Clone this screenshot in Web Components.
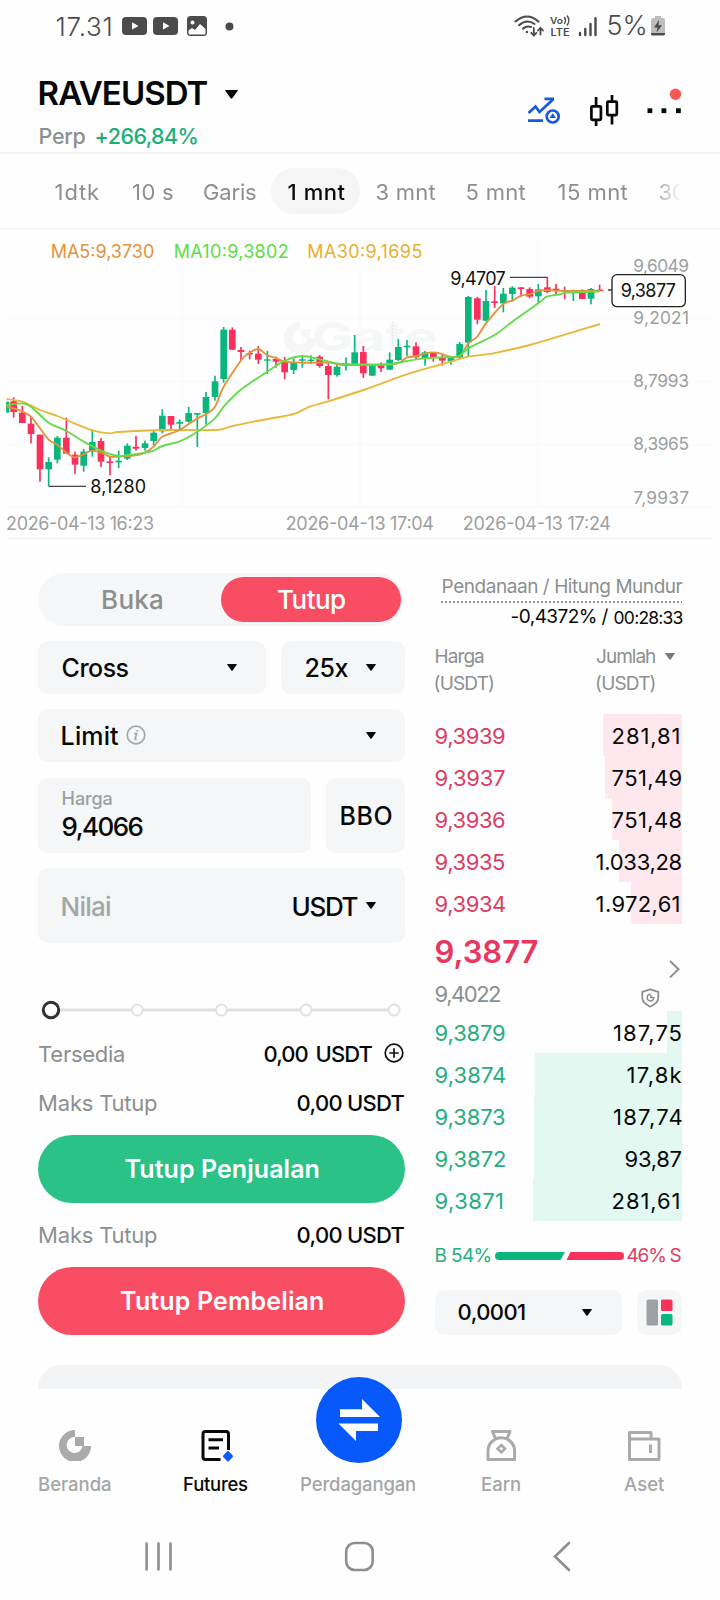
<!DOCTYPE html>
<html lang="id">
<head>
<meta charset="utf-8">
<title>RAVEUSDT Perp</title>
<style>
html,body{margin:0;padding:0;background:#fefefe}
body{width:720px;height:1600px;overflow:hidden;font-family:Inter,"Liberation Sans",sans-serif;color:#070808}
</style>
</head>
<body>
<trade-app></trade-app>
<script>
const define = (name, css, html, setup) => {
  const tpl = document.createElement('template');
  tpl.innerHTML = `<style>:host{display:block;box-sizing:border-box}*{box-sizing:border-box}svg{display:block;flex:none}${css}</style>${html}`;
  customElements.define(name, class extends HTMLElement {
    constructor() { super(); this.attachShadow({ mode: 'open' }); }
    connectedCallback() {
      if (this.shadowRoot.childNodes.length) return;
      this.shadowRoot.append(tpl.content.cloneNode(true));
      if (setup) setup(this, this.shadowRoot);
    }
  });
};

/* One line of text, tracked so its ink spans the width in "w" */
const ctx = document.createElement('canvas').getContext('2d');
define('ui-text', `:host{flex:none;white-space:nowrap;height:1.2em;line-height:1.2em}span{display:block;padding-top:1px}`, `<span><slot></slot></span>`, (el, root) => {
  const s = +el.getAttribute('s'), w = +el.getAttribute('w'), f = el.getAttribute('f') || 400;
  const txt = el.textContent;
  ctx.font = `${f} ${s}px Inter`;
  const m = ctx.measureText(txt);
  const ink = m.actualBoundingBoxRight + m.actualBoundingBoxLeft;
  el.style.cssText += `;font-size:${s}px;font-weight:${f};width:${w}px`;
  if (el.getAttribute('c')) el.style.color = el.getAttribute('c');
  const span = root.querySelector('span');
  span.style.letterSpacing = ((w - ink) / (txt.length - 1)) + 'px';
  span.style.marginLeft = (m.actualBoundingBoxLeft + .6) + 'px';
});

define('ui-caret', `:host{flex:none;width:10px;height:7px;color:#070808}svg{width:100%;height:100%}`,
  `<svg viewBox="0 0 10 7" preserveAspectRatio="none"><path d="M.6 0H9.4Q10.2.1 9.7.8L5.6 6.5Q5 7.2 4.4 6.5L.3.8Q-.2.1.6 0Z" fill="currentColor"/></svg>`);

define('status-bar', `:host{height:60px;display:flex;align-items:center;padding:0 0 9px 56px;color:#4b4b4b}.g{flex:1}`, `
<ui-text s="26" w="54" f="300">17.31</ui-text>
<svg width="86" height="22" viewBox="0 0 86 22" style="margin:1px 0 0 12px"><g fill="#4b4b4b"><rect x="0" y="2" width="25" height="18" rx="4"/><rect x="31" y="2" width="25" height="18" rx="4"/><rect x="65" y="1" width="20" height="20" rx="3.5"/></g><g fill="#fff"><path d="M10 7.2v7.4l6.5-3.7zM41 7.2v7.4l6.5-3.7z"/><circle cx="70.500" cy="7.500" r="2"/><path d="M66.500 15.500l3.500-2.500 3 2 5-6 5.500 5v4q0 1.500-1.500 1.500h-14q-1.500 0-1.500-1.500z"/></g></svg>
<svg width="9" height="9" style="margin:1px 0 0 16.500px"><circle cx="4.500" cy="4.500" r="4" fill="#4b4b4b"/></svg>
<div class="g"></div>
<svg width="86" height="24" viewBox="514 14 86 24" fill="none" stroke="#4b4b4b" stroke-width="2.100" stroke-linecap="round"><path d="M515.500 21.500Q527 11.500 538.500 21.500M519 25.200Q527 18.500 534.500 24M523 28.600Q527 25.500 531 27"/><circle cx="527" cy="32" r="1.200" fill="#4b4b4b" stroke="none"/><path d="M533.800 28v7M531.200 32.800l2.600 2.700 2.600-2.700M540.500 34.500v-6.500M538 30.500l2.500-2.700 2.500 2.700" stroke-width="1.800"/><path d="M580 35v-2M585.300 35v-6M590.500 35v-11M595.500 35V18.200" stroke-width="2.400"/><g fill="#4b4b4b" stroke="none" font-family="Inter" font-weight="600"><text x="550" y="23.900" font-size="9" textLength="13" lengthAdjust="spacingAndGlyphs">Vo</text><text x="550.500" y="36.400" font-size="10" textLength="19" lengthAdjust="spacingAndGlyphs">LTE</text></g><path d="M564.500 17.500q2 2.800 0 6M567.300 16q3 4.300 0 9" stroke-width="1.400"/></svg>
<ui-text s="27" w="37" f="300" style="margin-left:8px">5%</ui-text>
<svg width="14" height="20" viewBox="0 0 14 20" style="margin:1px 55px 0 6px"><path d="M4 0h6v2h2q2 0 2 2v13H0V4q0-2 2-2h2z" fill="#bdbdbd"/><path d="M0 17h14v1q0 1.500-1.500 1.500h-11Q0 19.500 0 18z" fill="#4b4b4b"/><path d="M8 4L3 11.500h3.500L5.500 16.500 11 9.300H7.500z" fill="#4b4b4b"/></svg>`);

define('pair-header', `:host{height:94px;border-bottom:2px solid #f5f6f6;padding-left:39px;padding-right:38px;display:flex;justify-content:space-between}
.r{display:flex;align-items:center}.a{height:66px}.b{height:20px}.i{padding-top:26px;display:flex}`, `
<div><div class="r a"><ui-text s="33" w="168" f="600">RAVEUSDT</ui-text><ui-caret style="width:13px;height:9px;margin:2px 0 0 17.500px"></ui-caret></div>
<div class="r b"><ui-text s="21.500" w="46" c="#8c8f90" f="450">Perp</ui-text><ui-text s="21.500" w="101" c="#1cae7a" f="500" style="margin-left:11px">+266,84%</ui-text></div></div>
<div class="i"><svg width="155" height="42" viewBox="527 86 155 42" fill="none"><g stroke="#1459e0" stroke-width="2.700"><path d="M528.500 113l7-6.500 4 5.500 14-13M544.500 98.900h9.500M528 120.600h15"/><circle cx="552.700" cy="116.500" r="6" stroke-width="2.700"/><path d="M552.700 113.200l3.300 4.800h-6.600z" fill="#1459e0" stroke="none"/></g><g stroke="#070808" stroke-width="2.700"><rect x="591.400" y="106.300" width="9.500" height="13.500" rx="1"/><rect x="607.300" y="101.600" width="9.500" height="13.500" rx="1"/><path d="M596.100 97v9M596.100 120v6M612 95v6.500M612 115.500v9"/></g><g fill="#070808"><rect x="647.500" y="108.300" width="4.800" height="4.800"/><rect x="661.500" y="108.300" width="4.800" height="4.800"/><rect x="676" y="108.300" width="4.800" height="4.800"/></g><circle cx="675.500" cy="94.300" r="5.700" fill="#f45b55"/></svg></div>`);

define('interval-tabs', `:host{height:76px;border-bottom:2px solid #f5f6f6;padding:0 38px 0 55px;color:#8c8f90}
.c{display:flex;align-items:center;height:74px;width:627px;overflow:hidden;-webkit-mask-image:linear-gradient(90deg,#000 596px,transparent 627px)}
.p{background:#f5f5f5;color:#070808;height:46px;border-radius:23px;width:89.500px;flex:none;display:flex;align-items:center;padding-left:17.500px;margin:0 16px 0 15px}`, `
<div class="c"><ui-text s="22" w="43.500">1dtk</ui-text><ui-text s="22" w="40" style="margin-left:34px">10 s</ui-text><ui-text s="22" w="52" style="margin-left:31px">Garis</ui-text>
<div class="p"><ui-text s="22" w="57" f="500">1 mnt</ui-text></div>
<ui-text s="22" w="59">3 mnt</ui-text><ui-text s="22" w="59" style="margin-left:31px">5 mnt</ui-text><ui-text s="22" w="69" style="margin-left:33px">15 mnt</ui-text><ui-text s="22" w="25.500" style="margin-left:32px">30</ui-text></div>`);

/* Candles: colour, x centre, body top, body bottom, high, low (chart units, 3 per pixel) */
const candles = `g 18 515 548 515 548|r 41 514 546 502 563|r 67 548 579 527 579|r 93 581 612 560 640|r 120 614 718 614 755|g 146 696 718 682 768|g 172 623 689 618 700|r 199 623 671 563 671|r 225 674 704 665 732|g 251 665 707 657 725|g 277 636 664 598 680|r 303 633 695 624 711|r 330 694 699 678 736|g 356 692 697 662 714|g 382 647 686 640 690|r 408 650 656 618 662|g 435 640 654 632 662|g 461 608 633 603 647|g 487 557 604 538 610|r 513 558 584 558 600|g 539 576 581 568 602|g 566 549 575 531 578|g 592 549 554 549 651|g 618 501 549 486 584|g 645 454 501 437 512|g 671 299 447 291 458|r 697 299 359 292 360|r 723 360 366 351 391|r 749 369 373 362 388|r 775 371 389 348 402|g 802 388 392 363 432|r 828 387 395 380 413|r 854 395 427 381 448|g 881 396 420 385 432|g 907 388 392 380 413|g 933 389 393 376 402|r 959 380 408 375 413|r 985 408 435 400 508|g 1011 410 435 403 440|g 1038 400 408 382 422|g 1064 367 402 315 404|r 1090 366 430 348 444|g 1117 404 437 402 437|r 1143 402 415 397 426|g 1169 389 419 367 419|g 1195 351 390 327 393|g 1221 347 352 330 378|r 1248 349 382 337 388|g 1275 367 387 363 407|r 1300 367 382 367 395|r 1327 382 392 375 407|g 1353 380 394 380 404|g 1379 342 382 336 384|g 1405 201 338 198 380|r 1432 205 269 201 283|g 1458 213 272 180 274|r 1484 214 219 168 234|g 1510 191 220 174 247|g 1537 173 192 169 210|r 1563 172 177 172 200|r 1589 177 200 172 205|g 1615 178 199 162 220|r 1642 172 186 142 190|r 1668 176 182 162 192|r 1694 180 185 170 207|g 1720 181 187 179 213|r 1747 188 207 178 207|g 1773 177 206 174 223|r 1799 179 183 164 183`;
const label = (x, cy, w, t, fill, size = 54) => `<text x="${x - 3}" y="${cy + size * .364}" font-size="${size}" textLength="${w + 6}" fill="${fill}">${t}</text>`;
/* Smooth path through a list of points */
const curve = s => {
  const p = s.split(' ').map(q => q.split(',').map(Number));
  let d = `M${p[0]}`;
  for (let i = 0; i < p.length - 1; i++) {
    const a = p[i - 1] || p[i], b = p[i], c = p[i + 1], e = p[i + 2] || c;
    d += `C${b[0] + (c[0] - a[0]) / 8} ${b[1] + (c[1] - a[1]) / 8} ${c[0] - (e[0] - b[0]) / 8} ${c[1] - (e[1] - b[1]) / 8} ${c[0]} ${c[1]}`;
  }
  return d;
};
define('price-chart', `:host{height:309px}svg{width:720px;height:309px;font-family:Inter}`, `
<svg viewBox="0 0 2160 927"><defs><clipPath id="plot"><rect x="19" y="0" width="2141" height="927"/></clipPath></defs>
<path d="M20 265H2140M20 455H2140M20 644H2140M20 831H2140M547 60V831M1080 60V831M1613 30V831" stroke="#f9fafa" stroke-width="4"/><path d="M20 925H2140" stroke="#f1f3f3" stroke-width="4"/>
<g fill="#f5f6f6"><path d="M900 275A49 49 0 1 0 949 324H922A22 22 0 1 1 900 300Z"/><rect x="905" y="297" width="25" height="25"/><text x="936" y="364" font-size="120" font-weight="700" textLength="376" lengthAdjust="spacingAndGlyphs">Gate</text></g>
<path d="M1178 275V350" stroke="#dfe2e2" stroke-width="3" stroke-dasharray="5 5"/>
<g id="c" clip-path="url(#plot)"></g>
<g fill="none" stroke-width="5.600" stroke-linejoin="round">
<path stroke="#e8b83a" d="${curve('20,507 67,515 120,540 172,558 225,581 277,601 330,610 356,606 487,600 650,600 690,590 749,577 854,558 885,551 930,530 985,514 1090,480 1220,433 1327,402 1405,380 1480,370 1600,342 1800,282')}"/>
<path stroke="#e4923c" d="${curve('20,530 60,541 93,560 146,629 170,643 199,668 225,682 251,672 277,662 303,668 330,680 356,680 408,676 435,668 461,650 487,620 539,600 592,565 618,553 645,530 671,470 724,390 749,368 775,357 802,376 828,384 854,395 900,398 985,398 1011,402 1038,405 1169,404 1200,397 1221,382 1250,378 1275,370 1300,367 1320,370 1350,380 1380,378 1405,340 1432,320 1458,280 1510,222 1537,212 1563,197 1589,193 1615,182 1650,181 1710,183 1800,183')}"/>
<path stroke="#62dc48" d="${curve('20,525 67,520 93,530 146,578 199,603 251,635 303,662 356,678 435,668 461,662 487,648 539,634 592,605 645,565 671,530 724,478 802,425 854,392 907,378 959,388 1011,400 1064,403 1170,402 1221,393 1275,385 1327,382 1375,380 1405,355 1484,315 1537,275 1615,220 1640,200 1680,193 1700,188 1800,184')}"/></g>
<path d="M146 769H258M1530 142H1643M1824 180H1836" stroke="#444" stroke-width="4"/>
${label(155, 64, 305, 'MA5:9,3730', '#e4923c')}${label(524, 64, 339, 'MA10:9,3802', '#5edc42')}${label(925, 64, 339, 'MA30:9,1695', '#e8b030')}
${[['9,6049', 107], ['9,2021', 264], ['8,7993', 453], ['8,3965', 642], ['7,9937', 804]].map(l => label(1903, l[1], 161, l[0], '#9c9fa0', 52)).join('')}
<rect x="1836" y="134" width="220" height="96" rx="15" fill="#fefefe" stroke="#222" stroke-width="4"/>
${label(1865, 182, 160, '9,3877', '#111')}${label(1354, 144, 160, '9,4707', '#111')}${label(274, 770, 161, '8,1280', '#111')}
${label(21, 881, 438, '2026-04-13 16:23', '#9c9fa0')}${label(860, 881, 439, '2026-04-13 17:04', '#9c9fa0')}${label(1391, 881, 439, '2026-04-13 17:24', '#9c9fa0')}
</svg>`, (el, root) => {
  root.getElementById('c').innerHTML = candles.split('|').map(s => {
    const [k, x, t, b, h, l] = s.split(' ');
    return `<g fill="${k === 'g' ? '#0bb67c' : '#f8305c'}"><rect x="${x - 10}" y="${t}" width="20" height="${b - t}"/><rect x="${x - 2.5}" y="${h}" width="5" height="${l - h}"/></g>`;
  }).join('');
});

define('side-toggle', `:host{display:flex;width:365px;height:53px;border-radius:27px;background:#f4f6f7;padding:3.500px 2px 4.500px 0}
.o{width:183px;display:flex;justify-content:center;align-items:center;padding-left:5px;color:#8c8f90}.on{width:180px;background:#f84d62;color:#fff;border-radius:23px;padding:0}`,
  `<div class="o"><ui-text s="26" w="59" f="450">Buka</ui-text></div><div class="o on"><ui-text s="26" w="67" f="500">Tutup</ui-text></div>`);

define('field-box', `:host{display:flex;align-items:center;background:#f4f6f7;border-radius:10px;height:53px;padding:0 29px 0 24px;flex:none}`, `<slot></slot>`);

define('percent-slider', `:host{height:20px}`, `<svg width="367" height="20"><path d="M13 10H356" stroke="#dfe1e1" stroke-width="3"/><g fill="#fff" stroke="#e0e2e2" stroke-width="2"><circle cx="99.300" cy="10" r="5.500"/><circle cx="183.500" cy="10" r="5.500"/><circle cx="268" cy="10" r="5.500"/><circle cx="356" cy="10" r="5.500"/></g><circle cx="13" cy="10" r="7.700" fill="#fff" stroke="#303234" stroke-width="3"/></svg>`);

define('info-row', `:host{display:flex;justify-content:space-between;align-items:center;height:30px;padding:0 1px 0 .5px;color:#8c8f90}.v{display:flex;align-items:center;color:#070808}`,
  `<slot name="label"></slot><div class="v"><slot></slot></div>`);

define('action-button', `:host{display:flex;align-items:center;justify-content:center;height:68px;border-radius:34px;color:#fff;padding-bottom:2px}
:host([kind=sell]){background:#2bc287}:host([kind=buy]){background:#f84d62}`, `<slot></slot>`);

define('order-form', `:host{width:367px;padding-top:34px}.row{display:flex;gap:15px;margin-top:15px}
.in{height:75px}.st{display:flex;flex-direction:column;gap:0}.g{flex:1}`, `
<side-toggle></side-toggle>
<div class="row" style="margin-top:14.500px"><field-box style="width:228px"><ui-text s="25" w="66" f="500">Cross</ui-text><div class="g"></div><ui-caret></ui-caret></field-box>
<field-box style="width:124px"><ui-text s="25" w="43" f="500">25x</ui-text><div class="g"></div><ui-caret></ui-caret></field-box></div>
<div class="row"><field-box style="width:367px"><ui-text s="25" w="56.500" f="500">Limit</ui-text><svg width="20" height="20" viewBox="0 0 20 20" style="margin-left:7px" fill="none" stroke="#a4a7a8" stroke-width="1.700"><circle cx="10" cy="10" r="8.800"/><path d="M8.200 8.600h2.400l-1.400 5.200q-.2 1 1.400.4M11.200 5v1.800"/></svg><div class="g"></div><ui-caret></ui-caret></field-box></div>
<div class="row" style="margin-top:16px"><field-box class="in" style="width:273px;align-items:flex-start"><div class="st"><ui-text s="18" w="49" f="450" c="#9c9fa0" style="margin-top:9.500px">Harga</ui-text><ui-text s="26" w="80" f="450" style="margin-top:1.500px">9,4066</ui-text></div></field-box>
<field-box class="in" style="width:79px;padding:0 0 0 15px"><ui-text s="25" w="50" f="500">BBO</ui-text></field-box></div>
<div class="row"><field-box class="in" style="width:367px;padding-top:1px"><ui-text s="26" w="48.500" f="450" c="#a3a6a7">Nilai</ui-text><div class="g"></div><ui-text s="26" w="64" f="450">USDT</ui-text><ui-caret style="margin-left:9px"></ui-caret></field-box></div>
<percent-slider style="margin-top:57.500px"></percent-slider>
<info-row style="margin-top:18.500px"><ui-text slot="label" s="22" w="85">Tersedia</ui-text><ui-text s="22" w="43" f="450">0,00</ui-text><ui-text s="22" w="56" f="450" style="margin-left:9px">USDT</ui-text><svg width="20" height="20" viewBox="0 0 20 20" style="margin-left:12px" fill="none" stroke="#111" stroke-width="1.700"><circle cx="10" cy="10" r="8.800"/><path d="M10 5.300v9.400M5.300 10h9.400"/></svg></info-row>
<info-row style="margin-top:19px"><ui-text slot="label" s="22" w="118">Maks Tutup</ui-text><ui-text s="22" w="107" f="450">0,00 USDT</ui-text></info-row>
<action-button kind="sell" style="margin-top:17px"><ui-text s="25" w="193" f="600">Tutup Penjualan</ui-text></action-button>
<info-row style="margin-top:17px"><ui-text slot="label" s="22" w="118">Maks Tutup</ui-text><ui-text s="22" w="107" f="450">0,00 USDT</ui-text></info-row>
<action-button kind="buy" style="margin-top:17px"><ui-text s="25" w="202" f="600">Tutup Pembelian</ui-text></action-button>`);

define('book-row', `:host{height:42px}.r{height:42px;display:flex;justify-content:space-between;align-items:center;padding-top:1px;background:linear-gradient(var(--bg),var(--bg)) right/var(--d) 100% no-repeat}
:host{--bg:#ffe8ed}:host([side=bid]){--bg:#e2f8f0}`, `<div class="r"></div>`, (el, root) => {
  const bid = el.getAttribute('side') === 'bid', p = el.getAttribute('price'), a = el.getAttribute('amount');
  el.style.setProperty('--d', el.getAttribute('depth') + 'px');
  root.querySelector('.r').innerHTML = `<ui-text s="22" w="${p.endsWith('1') ? 66.5 : 69.5}" c="${bid ? '#27ad7e' : '#dc3d63'}">${p}</ui-text><ui-text s="22" w="${el.getAttribute('aw')}" style="margin-right:${a.endsWith('1') ? 4 : 1}px">${a}</ui-text>`;
});

define('depth-ratio', `:host{display:flex;align-items:center;height:20px}`, `
<ui-text s="19" w="55" c="#27ad7e">B 54%</ui-text><svg width="129" height="8" style="margin:1px 3.500px 0 4.500px"><path d="M4 0H70L65.500 8H4A4 4 0 0 1 4 0Z" fill="#0bb67c"/><path d="M75.500 0H125A4 4 0 0 1 125 8H71.500Z" fill="#f8305c"/></svg><ui-text s="19" w="54" c="#dc3d63">46% S</ui-text>`);

define('order-book', `:host{width:247px;padding-top:37px;color:#8c8f90}.r{display:flex;align-items:center}.e{justify-content:flex-end}.k{color:#070808}.sb{justify-content:space-between}`, `
<div class="r e" style="height:20px"><ui-text s="19" w="240">Pendanaan / Hitung Mundur</ui-text></div>
<svg width="247" height="2" style="margin-top:5px"><path d="M6 1H247" stroke="#909394" stroke-width="2" stroke-dasharray="2 2"/></svg>
<div class="r e k" style="height:22px;margin-top:2px"><ui-text s="19" w="97">-0,4372% /</ui-text><ui-text s="17.500" w="68" style="margin:1px 0 0 6px">00:28:33</ui-text></div>
<div class="r" style="height:27px;margin-top:15.500px"><ui-text s="19" w="48.500">Harga</ui-text><ui-text s="19" w="59" style="margin-left:112px">Jumlah</ui-text><ui-caret style="color:#787b7c;margin-left:10.500px"></ui-caret></div>
<div class="r" style="height:28px"><ui-text s="19" w="57.500">(USDT)</ui-text><ui-text s="19" w="57.500" style="margin-left:104px">(USDT)</ui-text></div>
<div class="k" style="margin-top:16.500px">
<book-row price="9,3939" amount="281,81" aw="66" depth="79"></book-row><book-row price="9,3937" amount="751,49" aw="69" depth="77"></book-row><book-row price="9,3936" amount="751,48" aw="69" depth="70"></book-row><book-row price="9,3935" amount="1.033,28" aw="85" depth="63"></book-row><book-row price="9,3934" amount="1.972,61" aw="82" depth="51"></book-row></div>
<div class="r sb" style="height:87px"><div><ui-text s="31" w="102" f="600" c="#e8365f" style="margin-top:4px">9,3877</ui-text><ui-text s="22" w="64.500" style="margin-top:10.500px">9,4022</ui-text></div>
<svg width="42" height="60" viewBox="641 937.500 42 60" fill="none" stroke="#8c8f90" overflow="visible"><path d="M671 960.500l8.500 8.200-8.500 8.200" stroke-width="2"/><path d="M651.300 988.800l8 2.600v6.200q0 5-8 8.600-8-3.600-8-8.600v-6.200z" stroke-width="1.800" stroke-linejoin="round"/><path d="M651.500 993.800a3.300 3.300 0 1 0 3.300 3.300h-3v-2.500" stroke-width="1.500"/></svg></div>
<div class="k">
<book-row side="bid" price="9,3879" amount="187,75" aw="67.500" depth="15"></book-row><book-row side="bid" price="9,3874" amount="17,8k" aw="54" depth="147"></book-row><book-row side="bid" price="9,3873" amount="187,74" aw="67.500" depth="148"></book-row><book-row side="bid" price="9,3872" amount="93,87" aw="56" depth="148"></book-row><book-row side="bid" price="9,3871" amount="281,61" aw="66" depth="149"></book-row></div>
<depth-ratio style="margin-top:24.500px"></depth-ratio>
<div class="r sb k" style="margin-top:24.500px"><field-box style="width:187px;height:45px;padding:0 30px 3.500px 23px"><ui-text s="22" w="66.500" f="450">0,0001</ui-text><ui-caret style="margin:4px 0 0 auto"></ui-caret></field-box>
<field-box style="width:45px;height:45px;padding:0 0 0 9px"><svg width="27" height="27"><rect x=".5" y=".5" width="11.500" height="26" rx="1.500" fill="#9da1a5"/><rect x="15" y=".5" width="11.500" height="11.500" rx="1.500" fill="#f8305c"/><rect x="15" y="15" width="11.500" height="11.500" rx="1.500" fill="#0bb67c"/></svg></field-box></div>`);

define('nav-item', `:host{display:flex;flex-direction:column;align-items:center;flex:none;padding-top:38px;color:#a3a6a7}:host([on]){color:#070808}.i{height:44.500px;width:34px}`, `<div class="i"><slot name="icon"></slot></div><slot></slot>`);

define('bottom-nav', `:host{height:122px;display:flex;padding:0 48px 0 38.500px;position:relative}
.fab{position:absolute;left:316px;top:-12px;width:86px;height:86px}.sp{padding-top:82.500px}`, `
<nav-item><svg slot="icon" width="34" height="34"><path d="M17 3A16 16 0 1 0 33 19H24.500A8 8 0 1 1 17 10Z" fill="#a8aaab"/><rect x="17" y="10" width="9" height="9" fill="#a8aaab"/></svg><ui-text s="18.500" w="72" f="450">Beranda</ui-text></nav-item>
<nav-item on style="margin-left:73px"><svg slot="icon" width="36" height="36" fill="none"><path d="M21.500 32.500H6.500Q4 32.500 4 30V7Q4 4.500 6.500 4.500H27Q29.500 4.500 29.500 7V23M9.500 12.700H24M9.500 21H20" stroke="#070808" stroke-width="3"/><path d="M29 25l4 4.300-4 4.300-4-4.300z" fill="#0d5cf5" stroke="#0d5cf5" stroke-width="2" stroke-linejoin="round"/></svg><ui-text s="18.500" w="64" f="500">Futures</ui-text></nav-item>
<div class="sp" style="margin:0 0 0 53px"><ui-text s="18.500" w="114" f="450" c="#a3a6a7">Perdagangan</ui-text></div>
<nav-item style="margin-left:67px"><svg slot="icon" width="34" height="36" fill="none" stroke="#a8aaab" stroke-width="3"><path d="M4 32.500V24A13.300 13.300 0 0 1 30.600 24V32.500Z" stroke-linejoin="round"/><path d="M11.500 11.500L8.500 4.500H26L23 11.500" stroke-linejoin="round"/><path d="M17.300 18l3.700 3.700-3.700 3.700-3.700-3.700z" stroke-width="2.600"/></svg><ui-text s="18.500" w="38" f="450">Earn</ui-text></nav-item>
<nav-item style="margin-left:104px"><svg slot="icon" width="36" height="36" fill="none" stroke="#a8aaab" stroke-width="3"><path d="M2.500 12V5.500H24V12M2.500 12H32V32.500H2.500Z" stroke-linejoin="round"/><path d="M23.500 17.500v8.500"/></svg><ui-text s="18.500" w="40" f="450">Aset</ui-text></nav-item>
<svg class="fab" viewBox="316 1377 86 86"><circle cx="359" cy="1420" r="43" fill="#0759fb"/><path d="M340 1409.300H362V1399L380 1417H340ZM378 1431H356V1441L338.500 1423.500H378Z" fill="#fff"/></svg>`);

define('system-bar', `:host{height:89px;padding:30px 0 0 144px}`, `<svg width="430" height="32" viewBox="144 1541 430 32" fill="none" stroke="#8e8e8e" stroke-width="2.600" stroke-linecap="round"><path d="M146.600 1543.500v26M158.500 1543.500v26M170.500 1543.500v26"/><rect x="346.200" y="1543" width="26.500" height="27" rx="8.500"/><path d="M569 1543l-14 13.500 14 13.500"/></svg>`);

define('trade-app', `:host{width:720px;height:1600px;display:flex;flex-direction:column}
status-bar,pair-header,interval-tabs,price-chart,main,.peek,bottom-nav,system-bar{flex:none}
main{display:flex;gap:30px;padding-left:38px;height:826px}.peek{height:24px;margin:0 38px;background:#f2f4f5;border-radius:22px 22px 0 0/24px 24px 0 0}`, `
<status-bar></status-bar><pair-header></pair-header><interval-tabs></interval-tabs><price-chart></price-chart>
<main><order-form></order-form><order-book></order-book></main>
<div class="peek"></div><bottom-nav></bottom-nav><system-bar></system-bar>`);
</script>
</body>
</html>
